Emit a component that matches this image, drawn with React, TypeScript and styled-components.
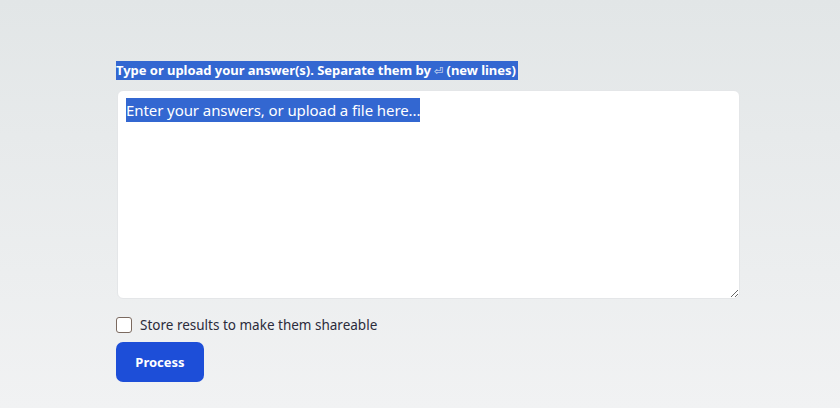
import { useState } from "react";
import styled, { createGlobalStyle } from "styled-components";

const GlobalStyle = createGlobalStyle`
  html, body {
    margin: 0;
    padding: 0;
    height: 100%;
  }
  body {
    background: linear-gradient(180deg, #e2e6e7 0%, #f1f2f3 100%);
    font-family: "Noto Sans", "Open Sans", Arial, sans-serif;
  }
  #root {
    min-height: 100%;
  }
`;

const Page = styled.main`
  min-height: 408px;
  box-sizing: border-box;
  padding: 61px 100px 0 116px;
`;

const AnswerForm = styled.form`
  display: flex;
  flex-direction: column;
  align-items: flex-start;
`;

const Label = styled.label`
  display: inline-block;
  font-size: 13px;
  font-weight: 700;
  line-height: 19px;
  letter-spacing: -0.04px;
  color: #ffffff;
  background: #3367d1;
  margin-bottom: 10px;
  padding-right: 2px;
`;

const ReturnGlyph = styled.span`
  font-weight: 400;
  font-size: 11px;
  opacity: 0.85;
`;

const BoxWrap = styled.div`
  position: relative;
  margin-left: 1px;
`;

const AnswerBox = styled.textarea`
  display: block;
  box-sizing: border-box;
  width: 623px;
  height: 209px;
  padding: 8px 8px;
  border: 1px solid #e4e6e8;
  border-radius: 6px;
  background: #ffffff;
  font-family: inherit;
  font-size: 15px;
  line-height: 24px;
  color: #222;
  resize: both;
  outline: none;
`;

/* selected placeholder text, drawn over the empty textarea */
const Hint = styled.span`
  position: absolute;
  top: 8px;
  left: 9px;
  font-size: 15px;
  line-height: 24px;
  letter-spacing: -0.08px;
  color: #ffffff;
  background: #3367d1;
  pointer-events: none;
`;

const StoreRow = styled.label`
  display: flex;
  align-items: center;
  gap: 8px;
  margin-top: 17px;
  font-size: 13.5px;
  color: #2b2b3b;
  cursor: pointer;
`;

const Box = styled.input`
  appearance: none;
  margin: 0;
  width: 16px;
  height: 16px;
  border: 1px solid #7b6a60;
  border-radius: 3px;
  background: #ffffff;
`;

const ProcessButton = styled.button`
  margin-top: 8px;
  width: 88px;
  height: 40px;
  border: none;
  border-radius: 7px;
  background: #1d4ed8;
  color: #ffffff;
  font-family: inherit;
  font-size: 13px;
  font-weight: 700;
  cursor: pointer;
`;

export default function App() {
  const [answers, setAnswers] = useState<string>("");
  const [store, setStore] = useState<boolean>(false);

  return (
    <>
      <GlobalStyle />
      <Page>
        <AnswerForm onSubmit={(e) => e.preventDefault()}>
          <Label htmlFor="answers">
            Type or upload your answer(s). Separate them by{" "}
            <ReturnGlyph>⏎</ReturnGlyph> (new lines)
          </Label>
          <BoxWrap>
            <AnswerBox
              id="answers"
              value={answers}
              onChange={(e) => setAnswers(e.target.value)}
            />
            {answers === "" && (
              <Hint>Enter your answers, or upload a file here...</Hint>
            )}
          </BoxWrap>
          <StoreRow>
            <Box
              type="checkbox"
              checked={store}
              onChange={(e) => setStore(e.target.checked)}
            />
            Store results to make them shareable
          </StoreRow>
          <ProcessButton type="submit">Process</ProcessButton>
        </AnswerForm>
      </Page>
    </>
  );
}
